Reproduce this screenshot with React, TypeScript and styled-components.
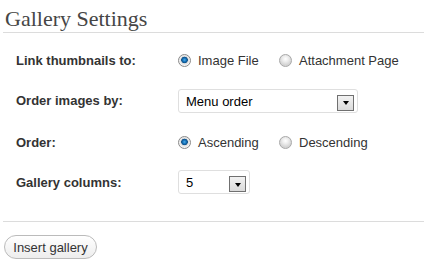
import React from "react";
import styled, { createGlobalStyle } from "styled-components";

const Global = createGlobalStyle`
  html, body { margin: 0; padding: 0; background: #fff; }
  body { font-family: "Liberation Sans", Arial, sans-serif; font-size: 13px; color: #333; }
`;

const Page = styled.div`
  width: 424px;
  height: 277px;
  overflow: hidden;
  background: #fff;
`;

const Title = styled.h3`
  margin: 0 0 0 3px;
  padding: 8px 0 0 2px;
  box-sizing: border-box;
  font-family: "Liberation Serif", Georgia, serif;
  font-weight: normal;
  font-size: 22px;
  line-height: 22px;
  color: #464646;
  border-bottom: 1px solid #dcdcdc;
  height: 33px;
`;

const Form = styled.div`
  padding: 7px 0 0 16px;
`;

const Row = styled.div<{ $h: number }>`
  display: grid;
  grid-template-columns: 162px auto;
  align-items: center;
  height: ${(p) => p.$h}px;
`;

const Label = styled.span`
  font-weight: bold;
  color: #333;
`;

const Options = styled.div`
  display: flex;
  align-items: center;
`;

const Option = styled.label<{ $w?: number }>`
  display: flex;
  align-items: center;
  gap: 7px;
  width: ${(p) => (p.$w ? `${p.$w}px` : "auto")};
  color: #333;
`;

const Radio = styled.span<{ $on?: boolean }>`
  width: 13px;
  height: 13px;
  border-radius: 50%;
  box-sizing: border-box;
  border: 1px solid ${(p) => (p.$on ? "#8a8a8a" : "#a8a8a8")};
  background: ${(p) =>
    p.$on
      ? "radial-gradient(circle at 50% 45%, #4fb0e8 0, #1a78c0 1.6px, #0d4f86 3px, #dcdcdc 3.6px, #f6f6f6 5.5px)"
      : "radial-gradient(circle at 50% 35%, #ffffff 0, #ececec 3px, #d4d4d4 6px)"};
  flex: none;
`;

const Select = styled.div<{ $w: number }>`
  display: flex;
  align-items: flex-start;
  justify-content: space-between;
  width: ${(p) => p.$w}px;
  height: 24px;
  box-sizing: border-box;
  border: 1px solid #dfdfdf;
  border-radius: 3px;
  background: #fff;
  padding: 4px 3px 0 7px;
  color: #000;
  line-height: 16px;
`;

const ArrowBtn = styled.span`
  width: 17px;
  height: 16px;
  box-sizing: border-box;
  border: 1px solid #707070;
  background: linear-gradient(#f2f2f2, #dadada);
  display: flex;
  align-items: center;
  justify-content: center;
  margin-top: 1px;
`;

const Arrow = styled.span`
  width: 0;
  height: 0;
  border-left: 3.5px solid transparent;
  border-right: 3.5px solid transparent;
  border-top: 4px solid #000;
  margin-top: 1px;
`;

const Divider = styled.hr`
  margin: 21px 0 0 3px;
  border: none;
  border-top: 1px solid #dcdcdc;
  height: 0;
`;

const Button = styled.button`
  margin: 13px 0 0 4px;
  height: 24px;
  width: 93px;
  box-sizing: border-box;
  border: 1px solid #bbb;
  border-radius: 12px;
  background: linear-gradient(#ffffff, #ededed);
  font-family: "Liberation Sans", Arial, sans-serif;
  font-size: 13px;
  color: #333;
  padding: 0;
  display: block;
`;

function Dropdown({ w, value }: { w: number; value: string }) {
  return (
    <Select $w={w}>
      <span>{value}</span>
      <ArrowBtn>
        <Arrow />
      </ArrowBtn>
    </Select>
  );
}

export default function App() {
  return (
    <Page>
      <Global />
      <Title>Gallery Settings</Title>
      <Form>
        <Row $h={40}>
          <Label>Link thumbnails to:</Label>
          <Options>
            <Option $w={101}>
              <Radio $on />
              Image File
            </Option>
            <Option>
              <Radio />
              Attachment Page
            </Option>
          </Options>
        </Row>
        <Row $h={41}>
          <Label>Order images by:</Label>
          <Dropdown w={180} value="Menu order" />
        </Row>
        <Row $h={43}>
          <Label>Order:</Label>
          <Options>
            <Option $w={101}>
              <Radio $on />
              Ascending
            </Option>
            <Option>
              <Radio />
              Descending
            </Option>
          </Options>
        </Row>
        <Row $h={36}>
          <Label>Gallery columns:</Label>
          <Dropdown w={72} value="5" />
        </Row>
      </Form>
      <Divider />
      <Button>Insert gallery</Button>
    </Page>
  );
}
